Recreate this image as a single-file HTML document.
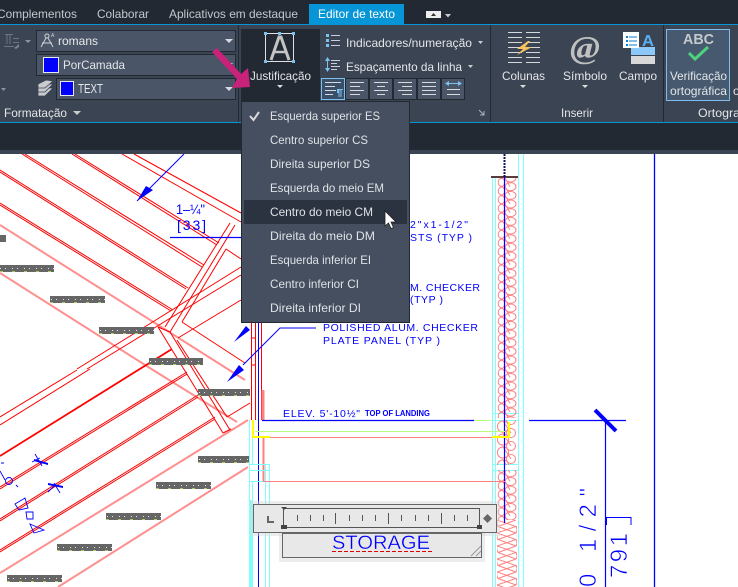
<!DOCTYPE html>
<html lang="pt">
<head>
<meta charset="utf-8">
<title>Justificação</title>
<style>
html,body{margin:0;padding:0;background:#fff;width:738px;height:587px;overflow:hidden}
svg{display:block}
text{font-family:"Liberation Sans",sans-serif}
.ui{font-size:12px;fill:#e4e6e8}
.tab{font-size:12px;fill:#c3c8cd}
.m{font-size:12px;fill:#dfe2e6}
.cad{fill:#0000ff;font-size:10.5px}
</style>
</head>
<body>
<svg width="738" height="587" viewBox="0 0 738 587" xmlns="http://www.w3.org/2000/svg">
<defs>
<pattern id="ins1" patternUnits="userSpaceOnUse" x="497" y="178" width="20" height="8.67">
<g fill="none" stroke="#ff8080" stroke-width="1"><ellipse cx="4.500" cy="4.300" rx="3.300" ry="4"/><ellipse cx="13.500" cy="0" rx="5.500" ry="4"/><ellipse cx="13.500" cy="8.670" rx="5.500" ry="4"/><path d="M8 0L13 8.670"/></g>
</pattern>
<pattern id="ins2" patternUnits="userSpaceOnUse" x="497" y="420" width="20" height="13">
<g fill="none" stroke="#ff8080" stroke-width="1"><circle cx="6" cy="6.500" r="5.600"/><circle cx="14" cy="0" r="4.500"/><circle cx="14" cy="13" r="4.500"/><path d="M6 1L14 13"/></g>
</pattern>
<pattern id="ins3" patternUnits="userSpaceOnUse" x="497" y="533" width="20" height="13">
<g fill="none" stroke="#ff8080" stroke-width="1"><path d="M0 0L19 6.500L0 13M1 6.500L19 0M1 6.500L19 13M1 6.500Q-1 3 0 0M19 6.500Q21 10 19 13"/></g>
</pattern>
</defs>

<rect width="738" height="587" fill="#fff"/>

<!-- CAD: pink beams -->
<g fill="none" stroke="#ff8f8f" stroke-width="2">
<path d="M0 225L245 380"/><path d="M0 273L153 370L237 422"/>
<path d="M0 573L248 420"/><path d="M58 587L248 467"/>
</g>
<!-- CAD: red beams -->
<g fill="none" stroke="#ff0000" stroke-width="1">
<path d="M22 154L202 267M25 154L204 265"/>
<path d="M72 154L217 245M75 154L219 243"/>
<path d="M122 154L241 222M134 154L241 213"/>
<path d="M0 170L188 288M0 172L186 289"/>
<path d="M0 203L173 310M0 205L171 311"/>
<path d="M0 417L77 370M0 425L90 369"/>
<path d="M77 369L241 267M87 369L241 275"/>
<path d="M0 456L172 349" stroke-width="1.800"/>
<path d="M178 338L241 300"/>
<path d="M0 487L187 372M0 489L187 374"/>
<path d="M0 519L198 395M0 521L198 397"/>
<path d="M0 550L215 417M0 552L215 419"/>
<path d="M227 417L250 403"/>
<!-- cross framing -->
<path d="M230 223L165 327M235 225L170 332"/>
<path d="M226 249L241 259M226 249L182 322M182 322L245 363"/>
<path d="M158 327L223 433M170 332L230 430M177 340L227 417M223 433L231 429"/>
<path d="M158 327L170 332"/>
<path d="M251 338H255M251 365H255"/>
</g>

<!-- Hatched labels -->
<g>
<g fill="#666"><rect x="0" y="235" width="6" height="7"/><rect x="0" y="265" width="54" height="7"/><rect x="50" y="296" width="55" height="7"/><rect x="99" y="327" width="55" height="7"/><rect x="149" y="358" width="54" height="7"/><rect x="198" y="389" width="52" height="7"/><rect x="198" y="456" width="52" height="7"/><rect x="156" y="482" width="55" height="7"/><rect x="106" y="513" width="55" height="7"/><rect x="57" y="544" width="55" height="7"/><rect x="7" y="575" width="55" height="7"/></g>
<g stroke="#e8e8e8" stroke-width="1" stroke-dasharray="1 4 1 6" fill="none"><path d="M0 268.500H54M51 299.500H105M100 330.500H154M150 361.500H203M199 392.500H250M199 459.500H250M157 485.500H211M107 516.500H161M58 547.500H112M8 578.500H62"/></g>
<g stroke="#a8d060" stroke-width="1" stroke-dasharray="3 9" fill="none"><path d="M0 271.500H54M50 302.500H105M99 333.500H154M149 364.500H203M198 395.500H250M198 462.500H250M156 488.500H211M106 519.500H161M57 550.500H112M7 581.500H62"/></g>
</g>

<!-- Left verticals -->
<g fill="none">
<path d="M251.500 300V420M255.500 300V420" stroke="#ff0000"/>
<path d="M258.500 300V587" stroke="#0000ff"/>
<path d="M261.500 300V420" stroke="#ff0000"/>
<path d="M263 390V420" stroke="#ff8080" stroke-width="3"/>
<path d="M263.500 437V481" stroke="#ff8080" stroke-width="2"/>
<path d="M249.500 420V587M252.500 420V464M252.500 481V587" stroke="#80ffff"/>
<path d="M265.500 464V587M269.500 464V587" stroke="#80ffff"/>
<path d="M250 464.500H269M250 470.500H269M250 481.500H265" stroke="#80ffff"/>
<path d="M250.500 500V587" stroke="#80ffff" stroke-width="3"/>
<path d="M492.500 178V587M495.500 178V587M518.500 154V587M523.500 154V587" stroke="#80ffff"/>
<path d="M654.500 154V587" stroke="#0000ff" stroke-width="1.300"/>
<path d="M492 413.500H518M492 420.500H518M492 464.500H518M492 470.500H518" stroke="#80ffff"/>
</g>
<rect x="497" y="178" width="20" height="240" fill="url(#ins1)"/>
<rect x="497" y="420" width="20" height="45" fill="url(#ins2)"/>
<rect x="497" y="470" width="20" height="50" fill="url(#ins1)"/>
<rect x="497" y="520" width="20" height="67" fill="url(#ins3)"/>
<rect x="491" y="176" width="27" height="2" fill="#5a3a3a"/>
<path d="M504.500 154V177" stroke="#111160" stroke-width="2" stroke-dasharray="2 1"/>
<path d="M504.500 177V523" stroke="#0000ff" stroke-width="1.200"/>

<!-- Landing -->
<path d="M262 420.500H474" stroke="#0000ff" stroke-width="1.200"/>
<path d="M474 420.500H491" stroke="#b4ff80"/>
<path d="M255 431.500H505" stroke="#b4ff80"/>
<path d="M255 437.500H510" stroke="#ff8080"/>
<path d="M263 481.500H505" stroke="#ff8080"/>
<path d="M253 420V437H270" fill="none" stroke="#ffff00" stroke-width="2"/>
<path d="M492 437H509V422" fill="none" stroke="#ffff00" stroke-width="2"/>

<!-- Dimensions (blue) -->
<g fill="none" stroke="#0000ff">
<path d="M184 154L137 201"/>
<path d="M170 237.500H241" stroke-width="1.200"/>
<path d="M243 365L280 328H316"/>
<path d="M529 420.500H626" stroke-width="1.200"/>
<path d="M595 410L616 431" stroke-width="4"/>
<path d="M605.500 420V587" stroke-width="1.200"/>
<path d="M606 517.500H631V525M606.500 517V525" stroke-width="1"/>
</g>
<g fill="#0000ff">
<path d="M137 201L146 186L153 190Z"/>
<path d="M234 342L246 326L250 330Z"/>
<path d="M227 382L239 365L244 370Z"/>
<path d="M34 459L48 463V465L34 461Z"/>
<path d="M48 483L63 486V488L48 485Z"/>
</g>
<g fill="none" stroke="#0000ff" stroke-width=".9">
<path d="M35 454L42 466M32 462L40 458M54 483L60 493M48 492L56 484"/>
<circle cx="9" cy="481" r="3.500"/>
<path d="M0 471L5 480M1 463H4M16 485L18 487"/>
<path d="M15 504L25 498L28 508L19 510ZM26 512H33V519H27ZM30 524L44 530L34 533Z"/>
</g>

<!-- CAD text -->
<text class="cad" x="176" y="214" textLength="29" lengthAdjust="spacingAndGlyphs" style="font-size:14px">1–¼"</text>
<text class="cad" x="177" y="230" textLength="29" lengthAdjust="spacing" style="font-size:14px">[33]</text>
<text class="cad" x="410" y="228" textLength="58" lengthAdjust="spacing">2"x1-1/2"</text>
<text class="cad" x="410" y="241" textLength="62" lengthAdjust="spacing">STS  (TYP )</text>
<text class="cad" x="410" y="291" textLength="70" lengthAdjust="spacing">M. CHECKER</text>
<text class="cad" x="410" y="303" textLength="33" lengthAdjust="spacing">(TYP )</text>
<text class="cad" x="323" y="331" textLength="155" lengthAdjust="spacing">POLISHED  ALUM.  CHECKER</text>
<text class="cad" x="323" y="344" textLength="117" lengthAdjust="spacing">PLATE  PANEL  (TYP )</text>
<text class="cad" x="283" y="417" textLength="77" lengthAdjust="spacing">ELEV.  5'-10½"</text>
<text class="cad" x="365" y="416" textLength="65" lengthAdjust="spacingAndGlyphs" style="font-size:8px;font-weight:bold">TOP OF LANDING</text>
<text class="cad" transform="translate(596,587) rotate(-90)" x="0" y="0" textLength="99" lengthAdjust="spacing" style="font-size:24px;stroke:#fff;stroke-width:.6">0 1/2"</text>
<text class="cad" transform="translate(627,578) rotate(-90)" x="0" y="0" textLength="45" lengthAdjust="spacing" style="font-size:24px;stroke:#fff;stroke-width:.6">791</text>

<!-- Text ruler -->
<rect x="250" y="501" width="250" height="35" fill="#d8d8d8" opacity=".45"/>
<rect x="279" y="530" width="206" height="32" fill="#d8d8d8" opacity=".45"/>
<rect x="282.500" y="533.500" width="199" height="24" fill="#e8e8e8" stroke="#666"/>
<rect x="253.500" y="504.500" width="243" height="28" fill="#e8e8e8" stroke="#666"/>
<rect x="283.500" y="508.500" width="196" height="19" fill="none" stroke="#555"/>
<path d="M297.500 515V521M310.500 515V521M323.500 515V521M335.500 513V524M349.500 515V521M362.500 515V521M375.500 515V521M388.500 513V524M401.500 515V521M415.500 515V521M428.500 515V521M441.500 513V524M454.500 515V521M467.500 515V521" stroke="#555"/>
<path d="M267 516V523H274V521H269V516Z" fill="#666"/>
<path d="M487.500 514L492 518.500L487.500 523L483 518.500Z" fill="#666"/>
<path d="M281 507H287L284 510ZM281 525H287V529H281ZM477 525H482V529H477Z" fill="#444"/>
<path d="M471 556L481 546M476 556L481 551" stroke="#999"/>
<text x="332" y="549" textLength="98" lengthAdjust="spacingAndGlyphs" style="font-size:19px;fill:#0000ff;stroke:#e8e8e8;stroke-width:.3">STORAGE</text>
<path d="M332 551.500H432" stroke="#e00000" stroke-dasharray="4 2"/>

<!-- Ribbon -->
<rect x="0" y="0" width="738" height="154" fill="#222933"/>
<rect x="0" y="150" width="738" height="4" fill="#3b4453"/>
<rect x="0" y="25" width="738" height="97" fill="#3b4453"/>
<rect x="0" y="24" width="738" height="1" fill="#0696d7"/>
<rect x="0" y="122" width="738" height="1" fill="#0696d7"/>
<rect x="309" y="4" width="95" height="20" fill="#0696d7"/>
<rect x="238" y="25" width="1" height="97" fill="#222933"/>
<rect x="490" y="25" width="1" height="97" fill="#222933"/>
<rect x="663" y="25" width="1" height="97" fill="#222933"/>

<text class="tab" x="-3" y="18" textLength="80" lengthAdjust="spacingAndGlyphs">Complementos</text>
<text class="tab" x="97" y="18" textLength="52" lengthAdjust="spacingAndGlyphs">Colaborar</text>
<text class="tab" x="169" y="18" textLength="129" lengthAdjust="spacingAndGlyphs">Aplicativos em destaque</text>
<text x="318" y="18" textLength="77" lengthAdjust="spacingAndGlyphs" style="font-size:12px;fill:#fff">Editor de texto</text>
<rect x="426" y="11" width="15" height="7" fill="#eee"/>
<path d="M431 16L433.500 13L436 16Z" fill="#333"/>
<path d="M445 14H451L448 17.500Z" fill="#ccc"/>

<!-- Left panel top-left icon -->
<g fill="none" stroke="#6e7580">
<path d="M5 34.500H13M7 34V44M10 34V44M13 38.500H19M13 42.500H19M4 46.500H14"/>
</g>
<path d="M14 48L19 44V47L16 49Z" fill="#7a808a"/>
<path d="M25 40H31L28 43Z" fill="#8d939c"/>
<path d="M1 88H6L3.500 91Z" fill="#8d939c"/>

<!-- Combos -->
<g fill="#4a5568" stroke="#222933">
<rect x="36.500" y="30.500" width="199" height="21"/>
<rect x="36.500" y="54.500" width="199" height="21"/>
<rect x="56.500" y="78.500" width="179" height="21"/>
</g>
<g fill="#d8dadd">
<path d="M225 39H233L229 43Z"/><path d="M225 63H233L229 67Z"/><path d="M225 87H233L229 91Z"/>
</g>
<g fill="none" stroke="#d0d2d6" stroke-width="1"><circle cx="47" cy="36" r="2"/><path d="M46 38L41 47M48 38L53 47M42 43H52"/></g>
<text x="51" y="37" style="font-size:5px;fill:#d0d2d6">A</text>
<text class="ui" x="58" y="45" textLength="40" lengthAdjust="spacingAndGlyphs" style="fill:#e8e8e8">romans</text>
<rect x="43.500" y="57.500" width="15" height="15" fill="#0000ff" stroke="#e8e8e8"/>
<text class="ui" x="63" y="69" textLength="62" lengthAdjust="spacingAndGlyphs">PorCamada</text>
<rect x="60.500" y="81.500" width="13" height="14" fill="#0000ff" stroke="#e8e8e8"/>
<text class="ui" x="78" y="93" textLength="25" lengthAdjust="spacingAndGlyphs" style="font-size:13px">TEXT</text>
<g fill="#c8cacd" stroke="#3b4453" stroke-width=".8">
<path d="M38 92L46 88L53 88L45 96H38Z"/><path d="M38 88L46 84L53 84L45 92H38Z"/><path d="M38 84L46 80L53 81L45 88H38Z"/>
</g>
<text class="ui" x="4" y="117" textLength="63" lengthAdjust="spacingAndGlyphs">Formatação</text>
<path d="M73 111H81L77 115Z" fill="#ccc"/>

<!-- Justificação button -->
<rect x="241" y="29" width="79" height="72" fill="#222933"/>
<g fill="none" stroke="#e0e0e0"><path d="M265.500 33.500V61.500M293.500 33.500V61.500M265.500 33.500H293.500M265.500 61.500H293.500"/></g>
<path d="M271 60L279 37H281L289 60" fill="none" stroke="#c4c4c4" stroke-width="3"/>
<path d="M275 52H285" stroke="#c4c4c4" stroke-width="2.500"/>
<g fill="#7cc0f0"><rect x="264" y="32" width="3" height="3"/><rect x="278" y="32" width="3" height="3"/><rect x="292" y="32" width="3" height="3"/><rect x="264" y="60" width="3" height="3"/><rect x="292" y="60" width="3" height="3"/></g>
<text class="ui" x="250" y="80" textLength="61" lengthAdjust="spacingAndGlyphs">Justificação</text>
<path d="M277 85H283L280 88Z" fill="#ddd"/>

<!-- Indicadores -->
<g fill="#7cc0f0"><rect x="326" y="34" width="3" height="3"/><rect x="326" y="39" width="3" height="3"/><rect x="326" y="44" width="3" height="3"/></g>
<path d="M331 35.500H340M331 40.500H340M331 45.500H340" stroke="#ccd" />
<text class="ui" x="346" y="47" textLength="126" lengthAdjust="spacingAndGlyphs">Indicadores/numeração</text>
<path d="M478 41H483L480.500 44Z" fill="#ccc"/>
<path d="M327.500 58V71" stroke="#7cc0f0"/>
<path d="M325 61L327.500 57L330 61ZM325 68L327.500 72L330 68Z" fill="#7cc0f0"/>
<path d="M331 60.500H340M331 63.500H337M331 66.500H340M331 69.500H337" stroke="#ccd"/>
<text class="ui" x="346" y="71" textLength="116" lengthAdjust="spacingAndGlyphs">Espaçamento da linha</text>
<path d="M468 65H473L470.500 68Z" fill="#ccc"/>

<!-- Align buttons -->
<g fill="#4a5568" stroke="#222933">
<rect x="345.500" y="78.500" width="23" height="21"/>
<rect x="369.500" y="78.500" width="23" height="21"/>
<rect x="393.500" y="78.500" width="23" height="21"/>
<rect x="417.500" y="78.500" width="23" height="21"/>
<rect x="441.500" y="78.500" width="23" height="21"/>
</g>
<rect x="321.500" y="78.500" width="23" height="21" fill="#3a5068" stroke="#7cc0f0"/>
<g stroke="#d8dadd" fill="none">
<path d="M325 82.500H341M325 86.500H335M325 90.500H336M325 94.500H333"/>
<path d="M350 82.500H364M350 86.500H360M350 90.500H364M350 94.500H360"/>
<path d="M374 82.500H388M377 86.500H385M374 90.500H388M377 94.500H385"/>
<path d="M398 82.500H412M402 86.500H412M398 90.500H412M402 94.500H412"/>
<path d="M422 82.500H436M422 86.500H436M422 90.500H436M422 94.500H436"/>
<path d="M447 89.500H460M447 94.500H460"/>
</g>
<path d="M337 89H343V90H341.500V97H340.500V90H339.500V97H338.500V93H337Z" fill="#7cc0f0"/>
<path d="M446 83.500H461" stroke="#7cc0f0"/>
<path d="M449 81L445 83.500L449 86ZM458 81L462 83.500L458 86Z" fill="#7cc0f0"/>
<path d="M479 110L484 115M484 111V115H480" fill="none" stroke="#aeb4bc"/>

<!-- Colunas -->
<path d="M508 32.500H522M526 32.500H540M508 37.500H522M526 37.500H540M508 42.500H522M526 42.500H540M508 47.500H522M526 47.500H540M508 52.500H522M526 52.500H540M508 57.500H522M526 57.500H540M508 62.500H522M526 62.500H540" stroke="#d6d8dc"/>
<path d="M528 41L517 49H523L517 55L532 47H525L530 41Z" fill="#f6c35f"/>
<text class="ui" x="502" y="80" textLength="43" lengthAdjust="spacingAndGlyphs">Colunas</text>
<path d="M520 85H526L523 88Z" fill="#ddd"/>

<!-- Simbolo -->
<text x="570" y="58" textLength="30" lengthAdjust="spacingAndGlyphs" style="font-family:'Liberation Serif',serif;font-style:italic;font-weight:bold;font-size:32px;fill:#c0c0c0">@</text>
<text class="ui" x="563" y="80" textLength="44" lengthAdjust="spacingAndGlyphs">Símbolo</text>
<path d="M582 85H588L585 88Z" fill="#ddd"/>

<!-- Campo -->
<rect x="631" y="47" width="24" height="8" fill="#8cc8f8"/>
<rect x="631" y="56" width="24" height="8" fill="#d8d8d8"/>
<rect x="623" y="32" width="16" height="16" fill="#fff"/>
<path d="M626 36H628V38H626ZM626 40H628V42H626ZM626 44H628V46H626Z" fill="#0a7fd0"/>
<path d="M629 37H637M629 41H637M629 45H637" stroke="#0a7fd0"/>
<text x="642" y="46" textLength="12" lengthAdjust="spacingAndGlyphs" style="font-size:16px;font-weight:bold;fill:#5aaef0">A</text>
<text class="ui" x="619" y="80" textLength="38" lengthAdjust="spacingAndGlyphs">Campo</text>
<text class="ui" x="561" y="117" textLength="32" lengthAdjust="spacingAndGlyphs">Inserir</text>

<!-- Verificacao -->
<rect x="666.500" y="29.500" width="63" height="71" fill="#46596f" stroke="#7cbcee"/>
<text x="683" y="44" textLength="31" lengthAdjust="spacingAndGlyphs" style="font-size:15px;font-weight:bold;fill:#c4c8cc">ABC</text>
<path d="M689 53L695 59L708 47" fill="none" stroke="#4fd27c" stroke-width="3"/>
<text class="ui" x="670" y="80" textLength="57" lengthAdjust="spacingAndGlyphs">Verificação</text>
<text class="ui" x="670" y="95" textLength="57" lengthAdjust="spacingAndGlyphs">ortográfica</text>
<text class="ui" x="733" y="95">o</text>
<text class="ui" x="698" y="117" textLength="42" lengthAdjust="spacingAndGlyphs">Ortogra</text>

<!-- Dropdown -->
<rect x="241.500" y="101.500" width="168" height="221" fill="#454f60" stroke="#222933"/>
<rect x="244" y="200" width="163" height="24" fill="#2b3240"/>
<path d="M250 116L253.500 120L259 112" fill="none" stroke="#d8dadd" stroke-width="2"/>
<text class="m" x="270" y="120" textLength="110" lengthAdjust="spacingAndGlyphs">Esquerda superior ES</text>
<text class="m" x="270" y="144" textLength="98" lengthAdjust="spacingAndGlyphs">Centro superior CS</text>
<text class="m" x="270" y="168" textLength="100" lengthAdjust="spacingAndGlyphs">Direita superior DS</text>
<text class="m" x="270" y="192" textLength="114" lengthAdjust="spacingAndGlyphs">Esquerda do meio EM</text>
<text class="m" x="270" y="216" textLength="103" lengthAdjust="spacingAndGlyphs">Centro do meio CM</text>
<text class="m" x="270" y="240" textLength="105" lengthAdjust="spacingAndGlyphs">Direita do meio DM</text>
<text class="m" x="270" y="264" textLength="101" lengthAdjust="spacingAndGlyphs">Esquerda inferior EI</text>
<text class="m" x="270" y="288" textLength="89" lengthAdjust="spacingAndGlyphs">Centro inferior CI</text>
<text class="m" x="270" y="312" textLength="91" lengthAdjust="spacingAndGlyphs">Direita inferior DI</text>

<!-- Cursor -->
<path d="M385 211V226L388.500 223L391 228.500L393.500 227.500L391 222H396Z" fill="#fff" stroke="#222" stroke-width=".8"/>

<!-- Magenta arrow -->
<path d="M212 52L217 48L241 74L248 68L250 87L232 88L237 79Z" fill="#c8227a"/>
</svg>
</body>
</html>
